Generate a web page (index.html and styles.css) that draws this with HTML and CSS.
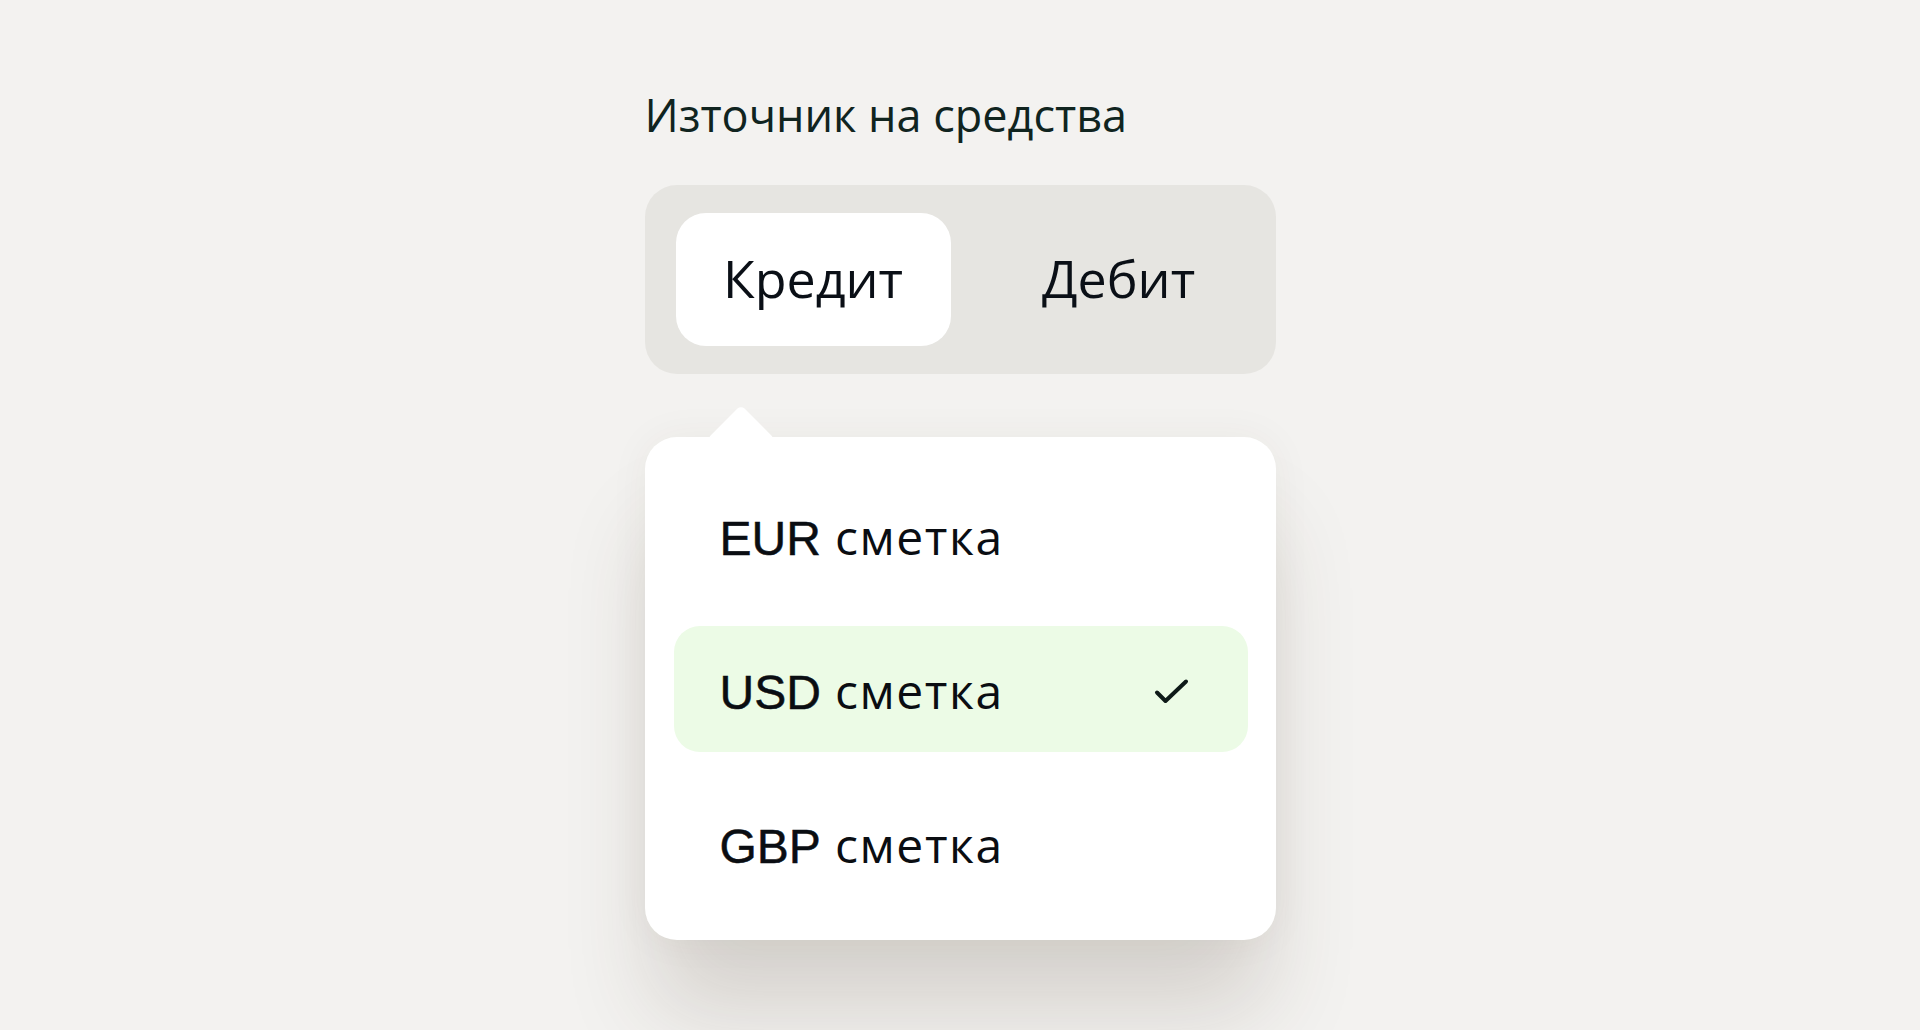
FILE: index.html
```html
<!DOCTYPE html>
<html lang="bg">
<head>
<meta charset="utf-8">
<title>Източник на средства</title>
<link rel="stylesheet" href="styles.css">
</head>
<body>
<main class="page">
  <section class="field">
    <div class="label">Източник на средства</div>
    <div class="segmented">
      <div class="seg seg-active">Кредит</div>
      <div class="seg seg-idle">Дебит</div>
    </div>
    <div class="dropdown">
      <span class="caret"></span>
      <div class="option">
        <span class="opt-text"><span class="code">EUR</span> сметка</span>
      </div>
      <div class="option option-selected">
        <span class="opt-text"><span class="code">USD</span> сметка</span>
        <svg class="check" width="36" height="28" viewBox="0 0 36 28" aria-hidden="true">
          <path d="M4 14.5 L12.5 23 L33 3.5" fill="none" stroke="#0e1a18" stroke-width="4" stroke-linecap="round" stroke-linejoin="round"/>
        </svg>
      </div>
      <div class="option">
        <span class="opt-text"><span class="code">GBP</span> сметка</span>
      </div>
    </div>
  </section>
</main>
</body>
</html>
```

FILE: styles.css
```css
html, body {
  margin: 0;
  padding: 0;
  height: 100%;
  background: #f3f2f0;
  overflow: hidden;
}

.page {
  display: flex;
  justify-content: center;
  padding-top: 83px;
}

.field {
  width: 631px;
  display: flex;
  flex-direction: column;
}

.label {
  font-family: "Open Sans", "Noto Sans", sans-serif;
  font-size: 45px;
  line-height: 64px;
  color: #10241f;
}

.segmented {
  margin-top: 38px;
  height: 189px;
  box-sizing: border-box;
  padding: 28px 31px;
  background: #e6e5e1;
  border-radius: 32px;
  display: flex;
}

.seg {
  font-family: "Open Sans", "Noto Sans", sans-serif;
  font-size: 52px;
  color: #0a0f16;
  display: flex;
  align-items: center;
  justify-content: center;
  padding-bottom: 4px;
  box-sizing: border-box;
}

.seg-active {
  width: 275px;
  background: #ffffff;
  border-radius: 30px;
}

.seg-idle {
  flex: 1;
  padding-left: 42px;
}

.dropdown {
  position: relative;
  margin-top: 63px;
  background: #ffffff;
  border-radius: 32px;
  padding: 35px 28px 34px 29px;
  display: flex;
  flex-direction: column;
  gap: 28px;
  box-shadow: 0 0 40px rgba(80, 60, 40, 0.05), 0 80px 90px -10px rgba(70, 52, 34, 0.17);
}

.caret {
  position: absolute;
  left: 72px;
  top: -22px;
  width: 48px;
  height: 48px;
  background: #ffffff;
  border-radius: 5px;
  transform: rotate(45deg);
}

.option {
  height: 126px;
  box-sizing: border-box;
  padding: 7px 59px 0 46px;
  line-height: 115px;
  font-family: "Open Sans", "Noto Sans", sans-serif;
  font-size: 48px;
  letter-spacing: 1.6px;
  color: #0a0d12;
  border-radius: 26px;
  display: flex;
  align-items: flex-start;
  justify-content: space-between;
}

.code {
  font-family: "Liberation Sans", Arial, sans-serif;
  font-size: 48px;
  letter-spacing: 0;
  -webkit-text-stroke: 0.5px #0a0d12;
}

.option-selected {
  background: #ecfbe6;
}

.check {
  align-self: center;
  margin-top: -2px;
}
```
